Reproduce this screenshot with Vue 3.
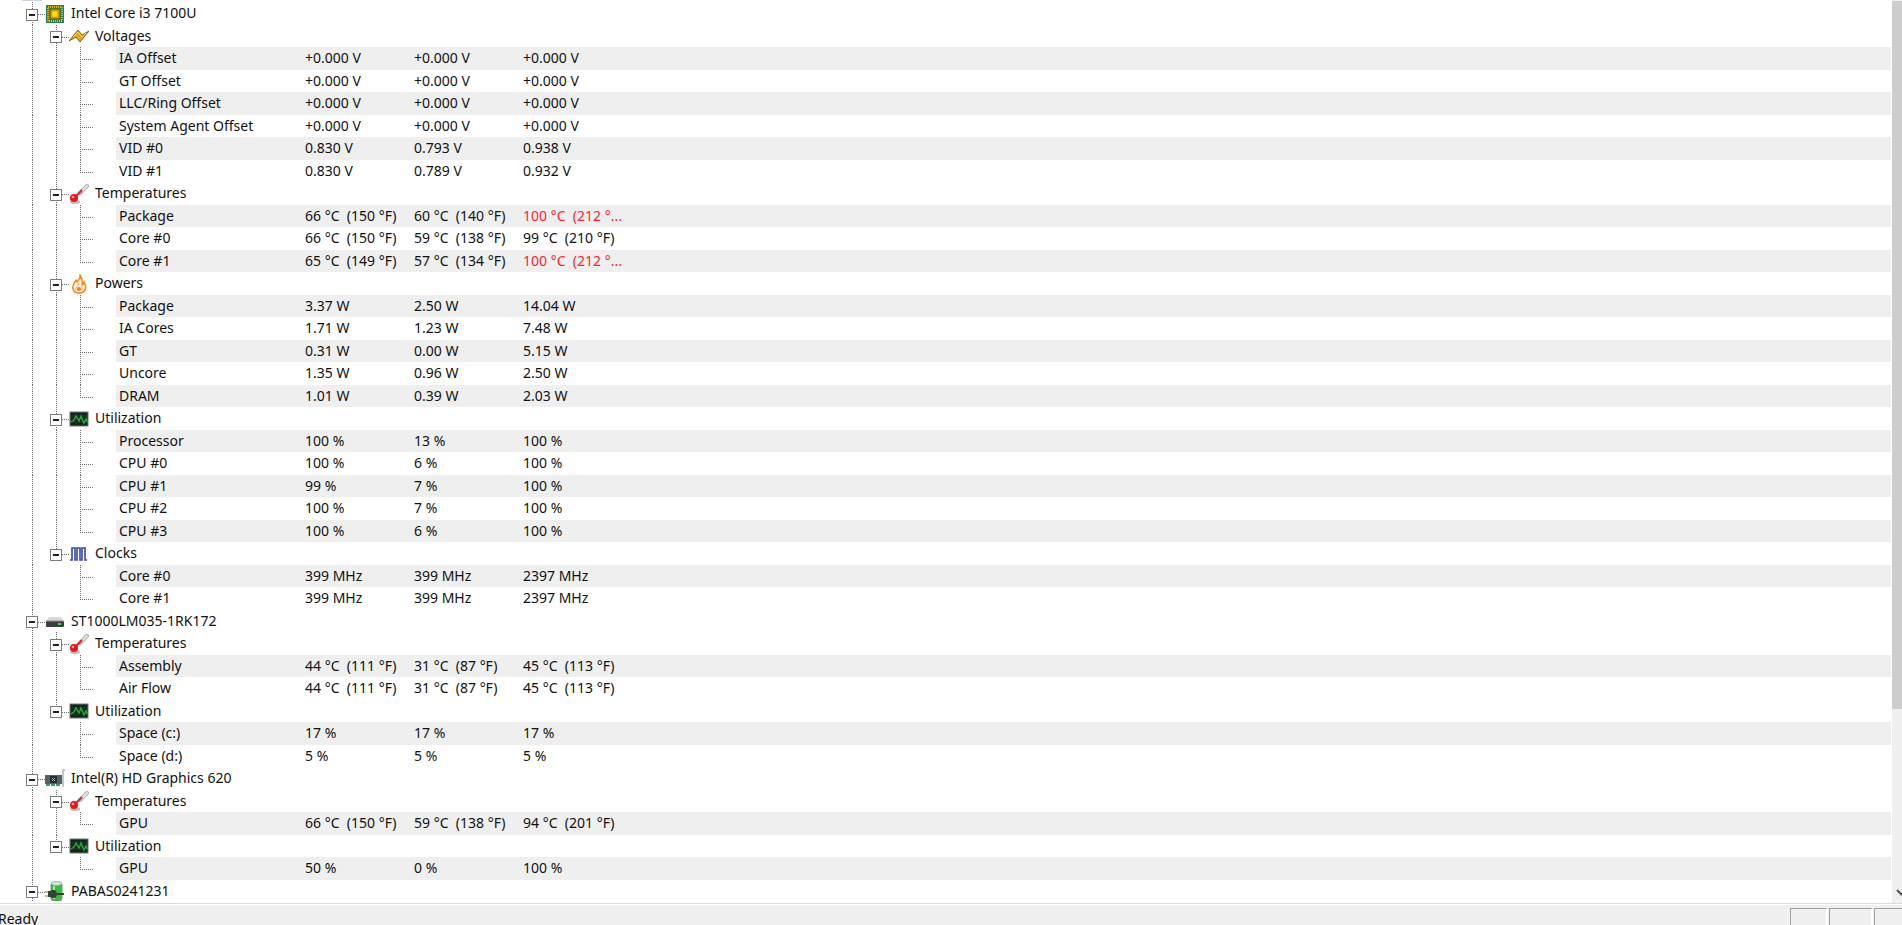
<template>
  <div class="sensor-window">
    <main class="sensor-body">
      <div class="tree-area">
        <div class="row-above"><span class="tree-cell line"><i class="row-above-icon"></i></span></div>
        <table class="sensor-table" aria-label="Sensors">
          <colgroup>
            <col class="col-name">
            <col class="col-value">
            <col class="col-value">
            <col class="col-value">
            <col>
          </colgroup>
          <tbody>
            <tr v-for="row in rows" :key="row.key">
              <th class="name" scope="row" :colspan="row.level < 2 ? 5 : 1">
                <div class="name-inner">
                  <template v-if="row.level === 0">
                    <span class="tree-cell line">
                      <button class="toggle" type="button" :aria-expanded="!closed[row.key]" :aria-label="row.label" @click="toggle(row.key)">
                        <svg viewBox="0 0 10 10"><path :d="closed[row.key] ? plusPath : minusPath" /></svg>
                      </button>
                    </span>
                  </template>
                  <template v-else-if="row.level === 1">
                    <span class="tree-cell line"></span>
                    <span class="tree-cell" :class="row.last ? 'line-top' : 'line'">
                      <button class="toggle" type="button" :aria-expanded="!closed[row.key]" :aria-label="row.label" @click="toggle(row.key)">
                        <svg viewBox="0 0 10 10"><path :d="closed[row.key] ? plusPath : minusPath" /></svg>
                      </button>
                    </span>
                  </template>
                  <template v-else>
                    <span class="tree-cell line"></span>
                    <span class="tree-cell" :class="{ line: !row.parentLast }"></span>
                    <span class="tree-cell branch" :class="row.last ? 'line-top' : 'line'"></span>
                    <span class="tree-cell"></span>
                  </template>
                  <span v-if="row.icon" class="tree-cell icon-cell">
                    <svg v-if="row.icon === 'chip'" class="icon" viewBox="0 0 20 20">
                      <rect x="1" y="1" width="18" height="18" fill="#2f8348" />
                      <rect x="3" y="3" width="14" height="14" fill="none" stroke="#c9bd2c" stroke-width="2" stroke-dasharray="1 1" />
                      <rect x="5" y="5" width="10" height="10" fill="#b98a06" stroke="#6f6a12" />
                      <rect x="7" y="7" width="6" height="6" fill="#ffdb1c" stroke="#e9ad08" />
                    </svg>
                    <svg v-else-if="row.icon === 'volt'" class="icon" viewBox="0 0 20 20">
                      <path d="M0 15L9 4l4 5 7-4-9 11-4-5z" fill="#e8a71f" stroke="#86601c" stroke-linejoin="round" />
                      <path d="M4 11l5-5 4 5 4-4" fill="none" stroke="#ffd765" />
                    </svg>
                    <svg v-else-if="row.icon === 'temp'" class="icon" viewBox="0 0 20 20">
                      <path d="M11 9l7-7" stroke="#b4b4b4" stroke-width="4" stroke-linecap="round" />
                      <path d="M13 7l5-5" stroke="#e2e2e2" stroke-width="2" stroke-linecap="round" />
                      <ellipse cx="6" cy="18" rx="5" ry="2" fill="#c4bcbc" />
                      <path d="M5 14l8-8" stroke="#de2323" stroke-width="2" />
                      <circle cx="5" cy="14" r="4" fill="#ee1414" />
                      <circle cx="4" cy="13" r="1.3" fill="#ffb8b8" />
                    </svg>
                    <svg v-else-if="row.icon === 'flame'" class="icon" viewBox="0 0 20 20">
                      <path d="M11 1c1 4-2 4-3 7-1-1-1-1-1-2-5 6-4 13 3 13s8-6 5-11c0 2-1 2-2 3 1-4 0-7-2-10z" fill="#fff3df" stroke="#f58b1f" stroke-width="1.6" stroke-linejoin="round" />
                      <path d="M10 9c0 3-4 4-3 7M12 12c2 2 1 4 0 5" fill="none" stroke="#f9a848" />
                      <circle cx="10" cy="15" r="2" fill="#f27a13" />
                    </svg>
                    <svg v-else-if="row.icon === 'graph'" class="icon" viewBox="0 0 20 20">
                      <rect x="1" y="3" width="18" height="14" fill="#13251a" stroke="#70757a" />
                      <path d="M2 7h16M2 10h16M2 13h16" stroke="#1c4425" />
                      <path d="M2 13l3-2 2-4 3 5 2-5 3 7 2-4 1 3" fill="none" stroke="#22ad34" stroke-width="1.4" />
                    </svg>
                    <svg v-else-if="row.icon === 'clock'" class="icon" viewBox="0 0 20 20">
                      <path d="M1 16h2V4h3v12h2V4h3v12h2V4h3v12h2" fill="none" stroke="#a5aed6" stroke-width="2" />
                      <path d="M1 16h2V4h3v12h2V4h3v12h2V4h3v12h2" fill="none" stroke="#303f96" stroke-width="1.2" />
                    </svg>
                    <svg v-else-if="row.icon === 'disk'" class="icon" viewBox="0 0 20 20">
                      <path d="M4 6h12l3 5H1z" fill="#d6d8da" />
                      <rect x="1" y="10" width="18" height="6" rx="1" fill="#3b3f42" />
                      <path d="M1 10h18" stroke="#8c9092" />
                      <rect x="13" y="12" width="3" height="2" fill="#34dc45" />
                    </svg>
                    <svg v-else-if="row.icon === 'card'" class="icon" viewBox="0 0 20 20">
                      <path d="M20 1h-2v17" fill="none" stroke="#a9b0bd" stroke-width="1.4" />
                      <rect x="0" y="6" width="17" height="9" fill="#52616a" />
                      <path d="M1 16h15" stroke="#3d9b69" stroke-width="2" stroke-dasharray="4 1" />
                      <rect x="5" y="7" width="7" height="7" fill="#252c31" />
                      <path d="M7 9l3 3m0-3l-3 3" stroke="#aebbc1" />
                    </svg>
                    <svg v-else class="icon" viewBox="0 0 20 20">
                      <rect x="6" y="1" width="11" height="19" rx="3" fill="#35bc38" stroke="#71957a" />
                      <path d="M9 5v13" stroke="#9bf08d" stroke-width="2" />
                      <ellipse cx="11.5" cy="2.5" rx="5" ry="2" fill="#dce4e1" stroke="#8fa295" stroke-width="0.6" />
                      <path d="M0 11h4M0 15h4" stroke="#c99d51" stroke-width="1.6" />
                      <path d="M3 10h2l2-1h3l2 3h7v2h-7l-2 3H7l-2-1H3z" fill="#354238" />
                    </svg>
                  </span>
                  <span class="label" :class="{ striped: row.striped }">{{ row.label }}</span>
                </div>
              </th>
              <template v-if="row.level === 2">
                <td
                  v-for="(value, i) in row.values"
                  :key="i"
                  class="value"
                  :class="{ striped: row.striped, hot: value.startsWith('100 °C') }"
                >{{ value }}</td>
                <td :class="{ striped: row.striped }"></td>
              </template>
            </tr>
          </tbody>
        </table>
      </div>
      <div class="scrollbar" aria-hidden="true">
        <div class="thumb"></div>
        <svg class="arrow" viewBox="0 0 20 20"><path d="M5 7l5 5 5-5" /></svg>
      </div>
    </main>
    <footer class="status-bar">
      <span class="status-text">Ready</span>
      <span class="pane"></span>
      <span class="pane wide"></span>
      <span class="pane last"></span>
    </footer>
  </div>
</template>

<script setup>
import { computed, reactive } from 'vue'

const minusPath = 'M2 5h6'
const plusPath = 'M2 5h6M5 2v6'

const zero = ['+0.000 V', '+0.000 V', '+0.000 V']

const devices = [
  {
    label: 'Intel Core i3 7100U',
    icon: 'chip',
    groups: [
      {
        label: 'Voltages',
        icon: 'volt',
        sensors: [
          ['IA Offset', ...zero],
          ['GT Offset', ...zero],
          ['LLC/Ring Offset', ...zero],
          ['System Agent Offset', ...zero],
          ['VID #0', '0.830 V', '0.793 V', '0.938 V'],
          ['VID #1', '0.830 V', '0.789 V', '0.932 V']
        ]
      },
      {
        label: 'Temperatures',
        icon: 'temp',
        sensors: [
          ['Package', '66 °C  (150 °F)', '60 °C  (140 °F)', '100 °C  (212 °...'],
          ['Core #0', '66 °C  (150 °F)', '59 °C  (138 °F)', '99 °C  (210 °F)'],
          ['Core #1', '65 °C  (149 °F)', '57 °C  (134 °F)', '100 °C  (212 °...']
        ]
      },
      {
        label: 'Powers',
        icon: 'flame',
        sensors: [
          ['Package', '3.37 W', '2.50 W', '14.04 W'],
          ['IA Cores', '1.71 W', '1.23 W', '7.48 W'],
          ['GT', '0.31 W', '0.00 W', '5.15 W'],
          ['Uncore', '1.35 W', '0.96 W', '2.50 W'],
          ['DRAM', '1.01 W', '0.39 W', '2.03 W']
        ]
      },
      {
        label: 'Utilization',
        icon: 'graph',
        sensors: [
          ['Processor', '100 %', '13 %', '100 %'],
          ['CPU #0', '100 %', '6 %', '100 %'],
          ['CPU #1', '99 %', '7 %', '100 %'],
          ['CPU #2', '100 %', '7 %', '100 %'],
          ['CPU #3', '100 %', '6 %', '100 %']
        ]
      },
      {
        label: 'Clocks',
        icon: 'clock',
        sensors: [
          ['Core #0', '399 MHz', '399 MHz', '2397 MHz'],
          ['Core #1', '399 MHz', '399 MHz', '2397 MHz']
        ]
      }
    ]
  },
  {
    label: 'ST1000LM035-1RK172',
    icon: 'disk',
    groups: [
      {
        label: 'Temperatures',
        icon: 'temp',
        sensors: [
          ['Assembly', '44 °C  (111 °F)', '31 °C  (87 °F)', '45 °C  (113 °F)'],
          ['Air Flow', '44 °C  (111 °F)', '31 °C  (87 °F)', '45 °C  (113 °F)']
        ]
      },
      {
        label: 'Utilization',
        icon: 'graph',
        sensors: [
          ['Space (c:)', '17 %', '17 %', '17 %'],
          ['Space (d:)', '5 %', '5 %', '5 %']
        ]
      }
    ]
  },
  {
    label: 'Intel(R) HD Graphics 620',
    icon: 'card',
    groups: [
      {
        label: 'Temperatures',
        icon: 'temp',
        sensors: [['GPU', '66 °C  (150 °F)', '59 °C  (138 °F)', '94 °C  (201 °F)']]
      },
      {
        label: 'Utilization',
        icon: 'graph',
        sensors: [['GPU', '50 %', '0 %', '100 %']]
      }
    ]
  },
  { label: 'PABAS0241231', icon: 'battery', groups: [] }
]

const closed = reactive({})

const toggle = (key) => {
  closed[key] = !closed[key]
}

// flatten the tree into the rows that are currently visible
const rows = computed(() => {
  const out = []
  devices.forEach((device, d) => {
    const deviceKey = `${d}`
    out.push({ key: deviceKey, level: 0, label: device.label, icon: device.icon })
    if (closed[deviceKey]) return
    device.groups.forEach((group, g) => {
      const groupKey = `${d}-${g}`
      const lastGroup = g === device.groups.length - 1
      out.push({ key: groupKey, level: 1, label: group.label, icon: group.icon, last: lastGroup })
      if (closed[groupKey]) return
      group.sensors.forEach(([label, ...values], s) => {
        out.push({
          key: `${groupKey}-${s}`,
          level: 2,
          label,
          values,
          striped: s % 2 === 0,
          last: s === group.sensors.length - 1,
          parentLast: lastGroup
        })
      })
    })
  })
  return out
})
</script>

<style>
body {
  margin: 0;
  background: #fff;
}
</style>

<style scoped>
.sensor-window {
  display: flex;
  flex-direction: column;
  height: 100vh;
  overflow: hidden;
  background: #fff;
  color: #111;
  font-family: 'Noto Sans', 'Open Sans', sans-serif;
  font-size: 14px;
  line-height: 22px;
}

.sensor-body {
  display: flex;
  flex: 1;
  min-height: 0;
}

.tree-area {
  flex: 1;
  min-width: 0;
  overflow: hidden;
}

.row-above {
  display: flex;
  height: 2px;
  padding-left: 20px;
}

.row-above-icon {
  width: 20px;
  height: 1px;
  margin-bottom: 1px;
  background: #ccd4e4;
}

.sensor-table {
  width: 100%;
  table-layout: fixed;
  border-collapse: collapse;
}

.col-name {
  width: 302px;
}

.col-value {
  width: 109px;
}

tr {
  height: 23px;
}

tr:nth-child(even) {
  height: 22px;
}

th,
td {
  height: inherit;
  padding: 0;
  font-weight: 400;
  text-align: left;
  vertical-align: top;
}

.name-inner {
  display: flex;
  height: 23px;
  padding-left: 20px;
}

tr:nth-child(even) .name-inner {
  height: 22px;
}

.tree-cell {
  position: relative;
  display: flex;
  flex: none;
  align-items: center;
  justify-content: center;
  width: 24px;
}

.line,
.line-top {
  background: repeating-linear-gradient(#6a6a6a 0 1px, transparent 1px 2px) 12px 0 / 1px 100% no-repeat;
}

.line-top {
  background-size: 1px 13px;
}

.branch::after,
.icon-cell::before {
  content: '';
  position: absolute;
  top: 12px;
  height: 1px;
  background: repeating-linear-gradient(90deg, #6a6a6a 0 1px, transparent 1px 2px);
}

.branch::after {
  left: 12px;
  width: 13px;
}

.icon-cell {
  justify-content: flex-start;
}

.icon-cell::before {
  left: -6px;
  width: 7px;
}

.toggle {
  width: 12px;
  height: 12px;
  margin: 2px 0 0;
  padding: 0;
  border: 1px solid #7c7c7c;
  background: #fff;
}

.toggle svg {
  display: block;
  width: 10px;
  height: 10px;
}

.toggle path {
  fill: none;
  stroke: #222;
  stroke-width: 2;
}

.icon {
  position: relative;
  width: 20px;
  height: 20px;
  margin-left: 1px;
}

.label {
  flex: 1;
  padding-left: 3px;
  white-space: nowrap;
}

.value {
  padding: 0 4px 0 3px;
  overflow: hidden;
  text-overflow: ellipsis;
  white-space: pre;
}

.striped {
  background: #efefef;
}

.hot {
  color: #ff1e2d;
}

.scrollbar {
  display: flex;
  flex-direction: column;
  justify-content: space-between;
  width: 10px;
  margin-left: 1px;
  overflow: hidden;
  background: #f0f0f0;
}

.thumb {
  height: calc(78% + 4px);
  margin-top: 1px;
  background: #cdcdcd;
}

.arrow {
  width: 20px;
  height: 20px;
}

.arrow path {
  fill: none;
  stroke: #555;
  stroke-width: 2;
}

.status-bar {
  box-sizing: border-box;
  display: flex;
  gap: 1px;
  height: 22px;
  overflow: hidden;
  border-top: 1px solid #dcdcdc;
  box-shadow: inset 0 1px #fff;
  background: #f0f0f0;
}

.status-text {
  flex: 1;
  margin-left: -2px;
  padding-top: 4px;
}

.pane {
  box-sizing: border-box;
  width: 38px;
  margin-top: 4px;
  border: solid;
  border-width: 1px 2px 0 1px;
  border-color: #a0a0a0 #fff;
  border-left-color: #a0a0a0;
}

.wide {
  width: 44px;
}

.last {
  width: 28px;
  border-right: 0;
}
</style>
